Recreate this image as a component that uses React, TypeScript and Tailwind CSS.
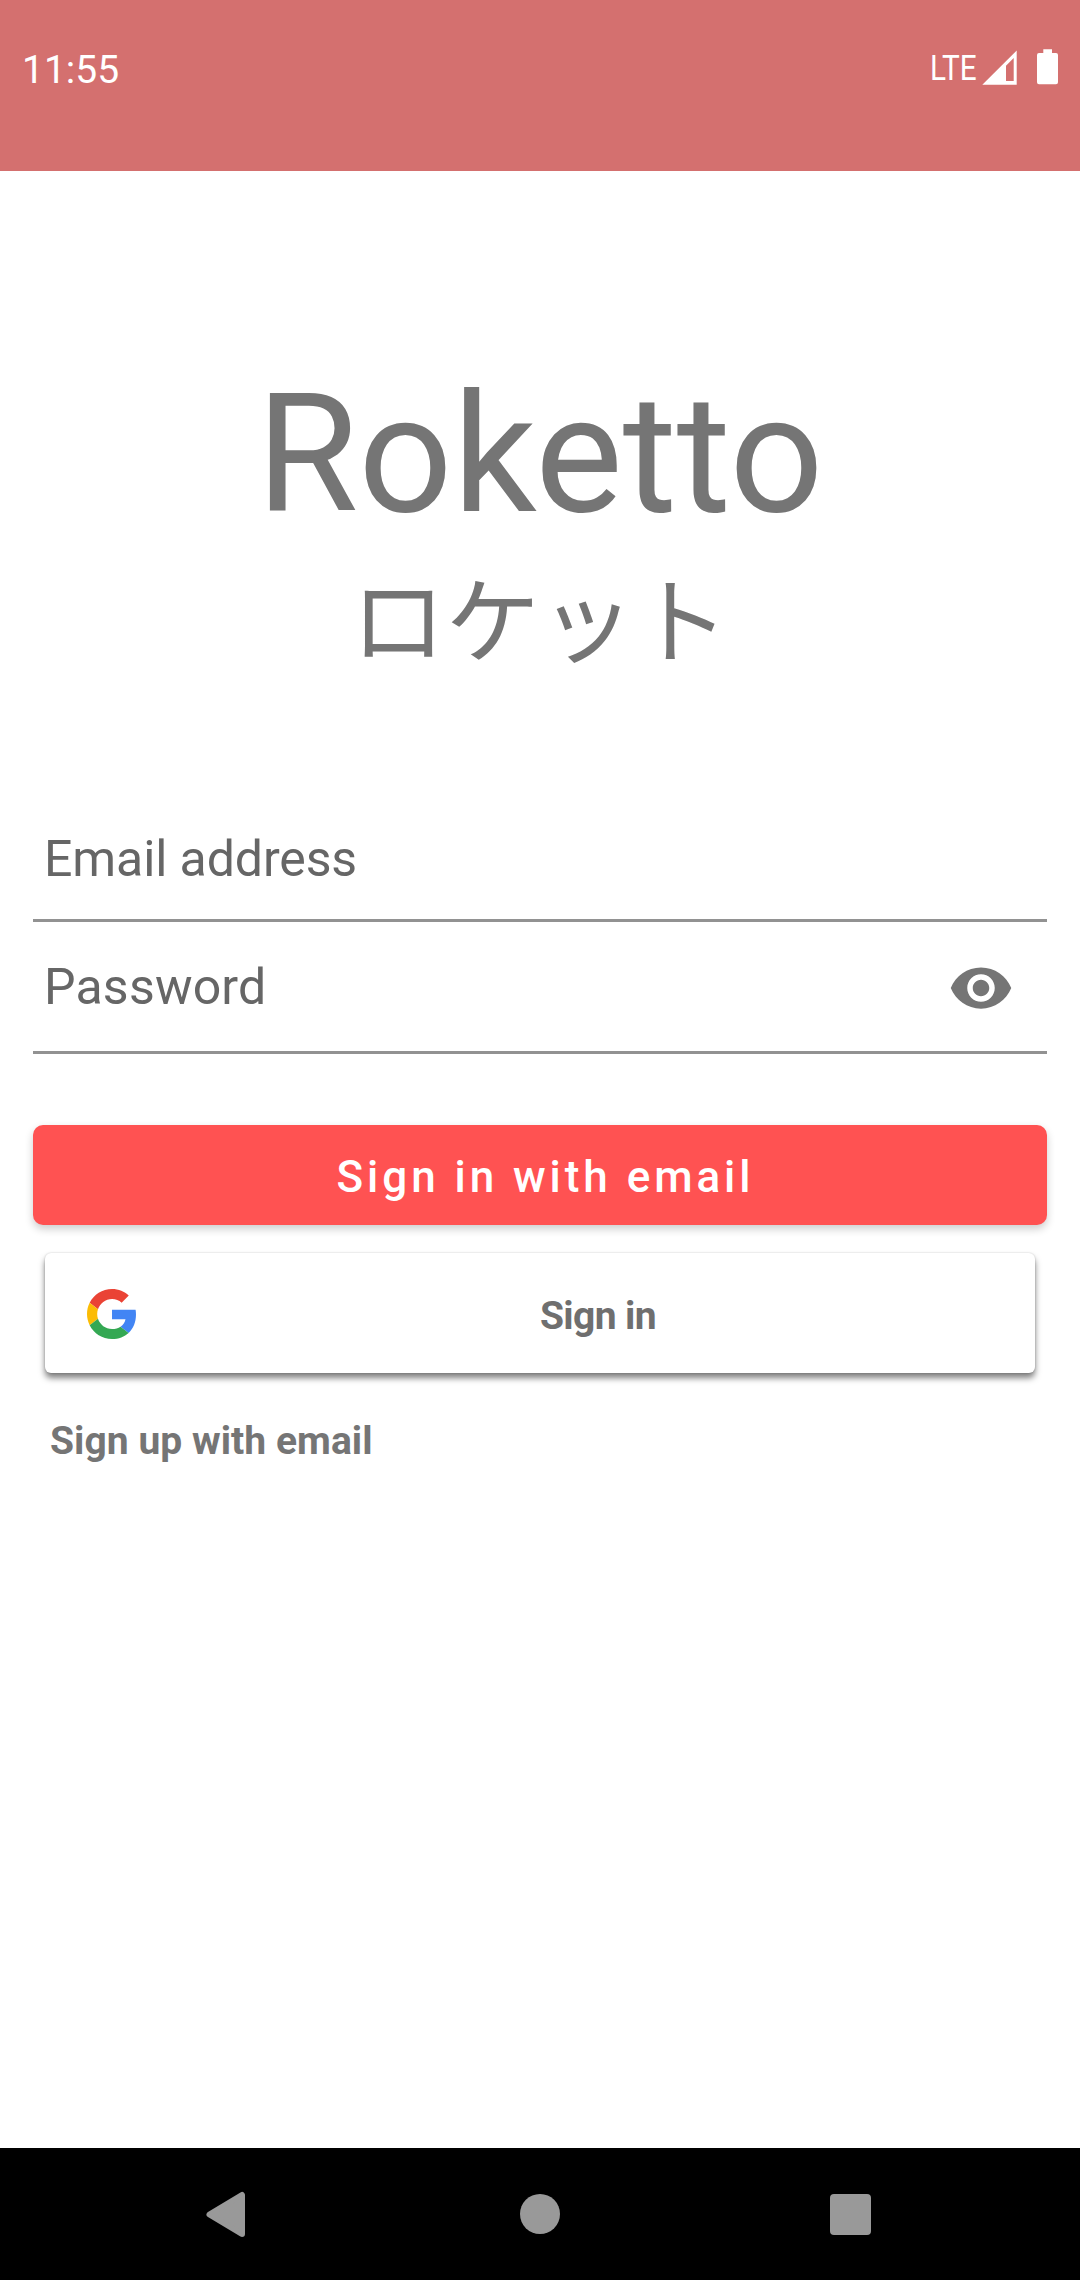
import React from "react";

function StatusBar() {
  return (
    <header className="flex h-[171px] items-start justify-between bg-[#d4706f] pl-[22px] pr-[22px] text-white">
      <span className="mt-[47px] text-[39px] leading-[46px]">11:55</span>
      <div className="mt-[45px] flex h-[46px] items-start">
        <span className="mt-[1px] w-[52px] origin-left scale-x-[0.85] whitespace-nowrap text-[35px] leading-[46px]">
          LTE
        </span>
        <svg className="mt-[5px] h-[36px] w-[35px]" viewBox="0 0 35 36" fill="#fff">
          <path fillRule="evenodd" d="M34.7 0.6V34.7H0.3ZM31.7 8L24 15.8V31H31.7Z" />
        </svg>
        <svg className="ml-[20px] mt-[4px] h-[36px] w-[21px]" viewBox="0 0 21 36" fill="#fff">
          <path d="M6.3 0.3H15V4H19a2 2 0 0 1 2 2V33.3a2 2 0 0 1-2 2H2a2 2 0 0 1-2-2V6a2 2 0 0 1 2-2H6.3Z" />
        </svg>
      </div>
    </header>
  );
}

function GoogleLogo() {
  return (
    <svg className="h-[50px] w-[49px]" viewBox="0 0 47 48" preserveAspectRatio="none">
      <path fill="#EA4335" d="M24 9.5c3.54 0 6.71 1.22 9.21 3.6l6.85-6.85C35.9 2.38 30.47 0 24 0 14.62 0 6.51 5.38 2.56 13.22l7.98 6.19C12.43 13.72 17.74 9.5 24 9.5z" />
      <path fill="#4285F4" d="M46.98 24.55c0-1.57-.15-3.09-.38-4.55H24v9.02h12.94c-.58 2.96-2.26 5.48-4.78 7.18l7.73 6c4.51-4.18 7.09-10.36 7.09-17.65z" />
      <path fill="#FBBC05" d="M10.53 28.59c-.48-1.45-.76-2.99-.76-4.59s.27-3.14.76-4.59l-7.98-6.19C.92 16.46 0 20.12 0 24c0 3.88.92 7.54 2.56 10.78l7.97-6.19z" />
      <path fill="#34A853" d="M24 48c6.48 0 11.93-2.13 15.89-5.81l-7.73-6c-2.15 1.45-4.92 2.3-8.16 2.3-6.26 0-11.57-4.22-13.47-9.91l-7.98 6.19C6.51 42.62 14.62 48 24 48z" />
    </svg>
  );
}

function NavBar() {
  return (
    <nav className="flex h-[132px] items-start justify-between bg-black pl-[205px] pr-[209px]">
      <svg className="mt-[43px] h-[47px] w-[41px]" viewBox="0 0 41 47">
        <path d="M4.5 23.5L37 4V43Z" fill="#999" stroke="#999" strokeWidth="6" strokeLinejoin="round" />
      </svg>
      <div className="ml-[4px] mt-[46px] size-[40px] rounded-full bg-[#999]" />
      <div className="mt-[46px] size-[41px] rounded-[4px] bg-[#999]" />
    </nav>
  );
}

export default function App() {
  return (
    <div className="flex h-[2280px] w-[1080px] flex-col overflow-hidden bg-white font-['Roboto',sans-serif] text-[#757575]">
      <StatusBar />
      <main className="flex flex-1 flex-col px-[33px] pt-[193px]">
        <h1 className="text-center text-[165.5px] leading-[180px]">Roketto</h1>
        <p lang="ja" className="mt-[1px] text-center font-['Noto_Sans_CJK_JP',sans-serif] text-[94.5px] leading-[140px]">
          ロケット
        </p>
        <div className="mt-[117px] flex h-[120px] items-start border-b-[3px] border-[#929292] pl-[11px] text-[#666]">
          <span className="mt-[27px] text-[50px] leading-[60px] tracking-[-0.1px]">Email address</span>
        </div>
        <div className="flex h-[132px] items-start justify-between border-b-[3px] border-[#929292] pl-[11px] pr-[33px] text-[#666]">
          <span className="mt-[35px] text-[50px] leading-[60px] tracking-[0.2px]">Password</span>
          <svg className="mt-[33px] size-[66px]" viewBox="0 0 24 24" fill="#757575">
            <path d="M12 4.5C7 4.5 2.73 7.61 1 12c1.73 4.39 6 7.5 11 7.5s9.27-3.11 11-7.5c-1.73-4.39-6-7.5-11-7.5zM12 17c-2.76 0-5-2.24-5-5s2.24-5 5-5 5 2.24 5 5-2.24 5-5 5zm0-8c-1.66 0-3 1.34-3 3s1.34 3 3 3 3-1.34 3-3-1.34-3-3-3z" />
          </svg>
        </div>
        <button className="mt-[71px] flex h-[100px] items-start justify-center rounded-[10px] bg-[#ff5252] text-white shadow-[0_4px_8px_rgba(0,0,0,0.2)]">
          <span className="mt-[22px] pl-[11px] text-[44px] font-medium leading-[60px] tracking-[3.95px]">Sign in with email</span>
        </button>
        <button className="mx-[12px] mt-[28px] flex h-[120px] items-start rounded-[6px] bg-white pl-[42px] text-[#6f6f6f] shadow-[0_0_2px_rgba(0,0,0,0.2),0_5px_6px_rgba(0,0,0,0.5)]">
          <span className="mt-[36px]">
            <GoogleLogo />
          </span>
          <span className="mt-[33px] flex-1 pl-[25px] text-center text-[39px] font-bold leading-[60px] tracking-[-0.6px]">Sign in</span>
        </button>
        <a className="ml-[17px] mt-[38px] text-[39px] font-bold leading-[60px] tracking-[0.05px]">Sign up with email</a>
      </main>
      <NavBar />
    </div>
  );
}
